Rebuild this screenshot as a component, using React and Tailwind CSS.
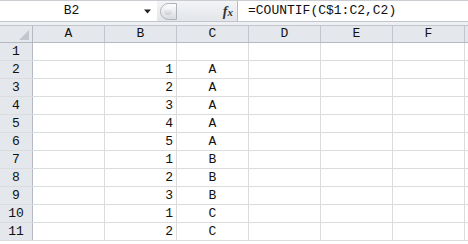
const cols = ['A', 'B', 'C', 'D', 'E', 'F'];

const rows = [
    { n: 1, b: '', c: '' },
    { n: 2, b: '1', c: 'A' },
    { n: 3, b: '2', c: 'A' },
    { n: 4, b: '3', c: 'A' },
    { n: 5, b: '4', c: 'A' },
    { n: 6, b: '5', c: 'A' },
    { n: 7, b: '1', c: 'B' },
    { n: 8, b: '2', c: 'B' },
    { n: 9, b: '3', c: 'B' },
    { n: 10, b: '1', c: 'C' },
    { n: 11, b: '2', c: 'C' },
];

const mono = "font-['Liberation_Mono',monospace] text-[13px] text-[#111]";

function FormulaBar() {
    return (
        <div className="flex h-[21px] border-t border-[#c9ccd1] bg-white">
            <div className="flex w-[157px] items-center">
                <div className={`flex-1 text-center ${mono}`}>B2</div>
                <svg width="9" height="5" viewBox="0 0 9 5" className="mr-[5px]">
                    <path d="M1 0.5 L8 0.5 L4.5 4.5 Z" fill="#222" />
                </svg>
            </div>
            <div className="flex w-[80px] items-center bg-gradient-to-b from-[#f3f4f6] to-[#e3e6ea]">
                <div className="ml-[3px] h-[17px] w-[17px] rounded-l-full border border-[#aeb3ba] bg-gradient-to-b from-[#fdfdfd] to-[#d8dbe0] flex items-center pl-[3px]">
                    <div className="h-[8px] w-[8px] rounded-full bg-gradient-to-b from-white to-[#c8ccd2]" />
                </div>
                <div className="flex-1" />
                <span className="mr-[4px] font-['Liberation_Serif',serif] text-[14px] font-bold italic text-[#333]">
                    f<span className="text-[11px]">x</span>
                </span>
            </div>
            <div className={`flex flex-1 items-center border-l border-[#b8bcc2] pl-[10px] ${mono}`}>
                =COUNTIF(C$1:C2,C2)
            </div>
        </div>
    );
}

export default function App() {
    return (
        <div className="h-[244px] w-[468px] overflow-hidden bg-white">
            <FormulaBar />
            <div className="h-[5px] border-y border-[#c2c6cc] bg-[#eef0f3]" />
            <div className="flex h-[17px] border-b border-[#b5bac2] bg-[#e4e7eb]">
                <div className="relative w-[33px] shrink-0 border-r border-[#b5bac2]">
                    <svg width="10" height="10" className="absolute bottom-[2px] right-[3px]">
                        <path d="M10 0 L10 10 L0 10 Z" fill="#c3c7cd" />
                    </svg>
                </div>
                {cols.map(c => (
                    <div key={c} className={`flex w-[72px] shrink-0 items-center justify-center border-r border-[#c2c6cc] ${mono}`}>
                        {c}
                    </div>
                ))}
                <div className="flex-1" />
            </div>
            {rows.map(r => (
                <div key={r.n} className="flex h-[18px] border-b border-[#dadcdd]">
                    <div className={`flex w-[33px] shrink-0 items-center justify-center border-r border-[#b5bac2] bg-[#e4e7eb] pt-[1px] ${mono}`}>
                        {r.n}
                    </div>
                    {cols.map(c => (
                        <div
                            key={c}
                            className={`flex w-[72px] shrink-0 items-center pt-[1px] border-r border-[#dadcdd] ${mono} ${c === 'B' ? 'justify-end pr-[3px]' : 'justify-center'}`}
                        >
                            {c === 'B' ? r.b : c === 'C' ? r.c : ''}
                        </div>
                    ))}
                    <div className="flex-1" />
                </div>
            ))}
        </div>
    );
}
